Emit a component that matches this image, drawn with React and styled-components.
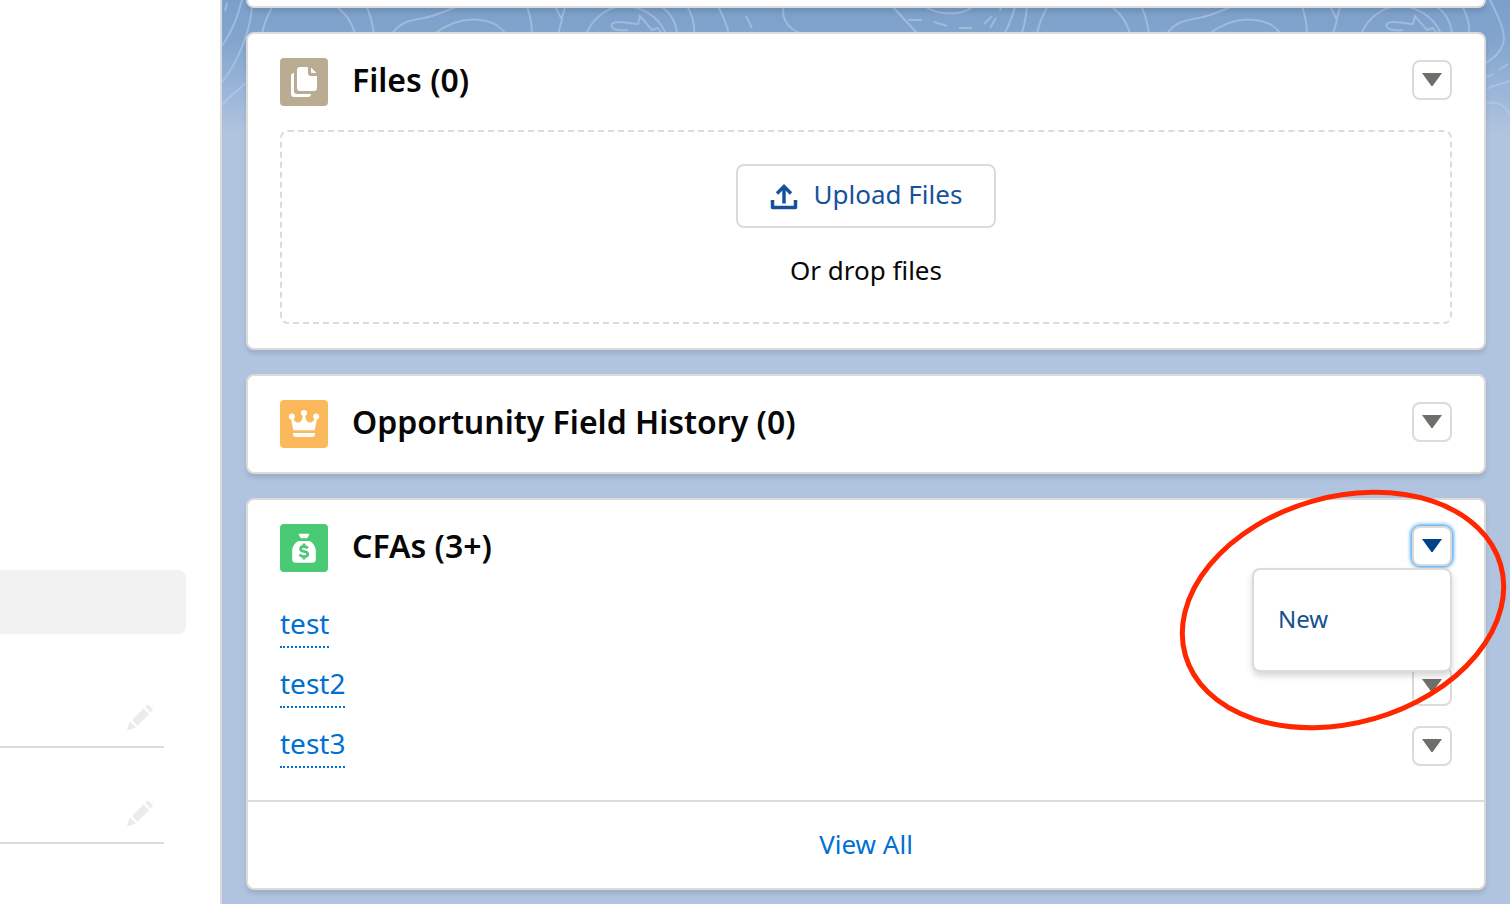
import React, { useState } from "react";
import styled, { createGlobalStyle, css } from "styled-components";

const GlobalStyle = createGlobalStyle`
  * {
    box-sizing: border-box;
  }

  body {
    margin: 0;
    background: #fff;
    color: #080707;
    font-family: "Noto Sans", "Open Sans", sans-serif;
    font-size: 26px;
    line-height: 36px;
  }

  button {
    font: inherit;
    cursor: pointer;
  }

  ul {
    list-style: none;
    margin: 0;
    padding: 0;
  }
`;

const Page = styled.div`
  display: grid;
  grid-template-columns: 220px minmax(0, 1fr);
  height: 100vh;
  overflow: hidden;
`;

const Details = styled.section`
  display: flex;
  flex-direction: column;
  justify-content: flex-end;
  padding: 0 56px 60px 0;
`;

const Highlight = styled.div`
  height: 64px;
  margin: 0 -22px 18px 0;
  border-radius: 0 8px 8px 0;
  background: #f2f2f2;
`;

const Field = styled.div`
  display: flex;
  align-items: flex-end;
  justify-content: flex-end;
  height: 96px;
  padding: 0 10px 15px;
  border-bottom: 2px solid #dddbda;
`;

const EditButton = styled.button`
  display: flex;
  padding: 0;
  border: none;
  background: none;
  color: #ecebea;

  svg {
    width: 28px;
    height: 28px;
  }
`;

const Related = styled.main`
  position: relative;
  display: flex;
  flex-direction: column;
  gap: 24px;
  padding: 0 24px;
  border-left: 2px solid #dddbda;
  background: linear-gradient(#7b9fca 0, #82a5cd 40px, #9ab5d8 90px, #b0c4df 134px) #b0c4df;
`;

const Contours = styled.svg`
  position: absolute;
  top: 0;
  left: 0;
  width: 100%;
  height: 140px;
  fill: none;
  stroke: #b9cdea;
  stroke-opacity: 0.55;
  stroke-width: 2;
`;

const Card = styled.article`
  position: relative;
  border: 2px solid #dddbda;
  border-radius: 8px;
  background: #fff;
  box-shadow: 0 4px 4px rgba(0, 0, 0, 0.1);
`;

const CardStub = styled(Card)`
  height: 8px;
  border-top: none;
  border-radius: 0 0 8px 8px;
`;

const CardHeader = styled.header`
  display: flex;
  gap: 24px;
  padding: 24px 32px;
`;

const EntityIcon = styled.span`
  width: 48px;
  height: 48px;
  border-radius: 4px;
  background: ${({ $color }) => $color};

  svg {
    display: block;
    width: 48px;
    height: 48px;
    fill: #fff;
  }
`;

const Title = styled.h2`
  flex: 1;
  margin: 0;
  font-size: 32px;
  font-weight: 600;
  line-height: 44px;
`;

const MenuAnchor = styled.div`
  position: relative;
  padding-top: 2px;
`;

const ArrowButton = styled.button`
  display: flex;
  align-items: center;
  justify-content: center;
  width: 40px;
  height: 40px;
  padding: 0;
  border: 2px solid #dddbda;
  border-radius: 8px;
  background: #fff;
  color: #706e6b;

  svg {
    width: 20px;
    height: 14px;
    fill: currentColor;
  }

  ${({ $open }) => $open && css`
    color: #004487;
    box-shadow: 0 0 4px 1px #1589ee;
  `}
`;

const Menu = styled.ul`
  position: absolute;
  z-index: 2;
  top: 44px;
  right: 0;
  width: 200px;
  && {
    padding: 24px 0;
  }
  border: 2px solid #dddbda;
  border-radius: 8px;
  background: #fff;
  box-shadow: 0 4px 6px rgba(0, 0, 0, 0.16);
`;

const MenuItem = styled.button`
  display: block;
  width: 100%;
  padding: 6px 24px 8px;
  border: none;
  background: none;
  color: #16528f;
  font-size: 24px;
  line-height: 38px;
  text-align: left;
`;

const DropZone = styled.div`
  display: flex;
  flex-direction: column;
  align-items: center;
  gap: 24px;
  margin: 0 32px 24px;
  padding: 32px 32px 34px;
  border: 2px dashed #dddbda;
  border-radius: 8px;
`;

const UploadButton = styled.button`
  display: flex;
  align-items: center;
  gap: 16px;
  height: 64px;
  padding: 0 32px;
  border: 2px solid #dddbda;
  border-radius: 8px;
  background: #fff;
  color: #16529a;

  svg {
    width: 28px;
    height: 28px;
  }

  span {
    padding-bottom: 4px;
  }
`;

const Records = styled.ul`
  && {
    padding: 0 32px 24px;
  }
`;

const Record = styled.li`
  display: flex;
  align-items: flex-start;
  justify-content: space-between;
  height: 60px;
  padding-top: 10px;

  a {
    padding-bottom: 6px;
    border-bottom: 2px dotted #0070d2;
    color: #0070d2;
    font-size: 28px;
    line-height: 34px;
    text-decoration: none;
  }
`;

const CardFooter = styled.footer`
  padding: 24px 0 26px;
  border-top: 2px solid #dddbda;
  text-align: center;

  a {
    color: #0070d2;
    text-decoration: none;
  }
`;

const Annotation = styled.svg`
  position: absolute;
  z-index: 3;
  top: -12px;
  right: -24px;
  width: 330px;
  height: 248px;
  fill: none;
  stroke: #ff2600;
  stroke-width: 5;
  pointer-events: none;
`;

const FilesIcon = () => (
  <svg viewBox="0 0 48 48" aria-hidden="true">
    <path d="M11 18a3 3 0 0 1 3-3v18a3 3 0 0 0 3 3h14a3 3 0 0 1-3 3H14a3 3 0 0 1-3-3z" />
    <path d="M20 9h8v6a3 3 0 0 0 3 3h6v12a3 3 0 0 1-3 3H20a3 3 0 0 1-3-3V12a3 3 0 0 1 3-3z" />
    <path d="M31 9.5l5.5 5.5H32a1 1 0 0 1-1-1z" />
  </svg>
);

const CrownIcon = () => (
  <svg viewBox="0 0 48 48" aria-hidden="true">
    <circle cx="24" cy="13" r="3" />
    <circle cx="11.8" cy="16.5" r="3" />
    <circle cx="36.2" cy="16.5" r="3" />
    <path d="M11 18l2-1c.5 3.500 2.500 5.500 5 5.500 3 0 4.800-3 4.800-8h2.400c0 5 1.800 8 4.800 8 2.500 0 4.500-2 5-5.500l2 1-2 11.300a1.200 1.200 0 0 1-1.200 1H14.200a1.200 1.200 0 0 1-1.200-1z" />
    <path d="M13 33h22v1a3 3 0 0 1-3 3H16a3 3 0 0 1-3-3z" />
  </svg>
);

const MoneyBagIcon = () => (
  <svg viewBox="0 0 48 48" aria-hidden="true">
    <path d="M19.500 9.800h9c.7 0 1 .5.700 1l-1.700 3c-.2.300-.5.500-.9.500h-5.200c-.4 0-.7-.2-.9-.5l-1.700-3c-.3-.5 0-1 .7-1z" />
    <path d="M18.500 17h11c4 2 6.300 6 6.300 10v8.200a3.500 3.500 0 0 1-3.500 3.500H15.700a3.500 3.500 0 0 1-3.500-3.500V27c0-4 2.300-8 6.300-10z" />
    <path d="M27.500 24.500c-.7-1.400-2-2-3.600-2-2 0-3.400.9-3.400 2.400 0 3.500 7.300 1.500 7.300 5.200 0 1.600-1.600 2.600-3.800 2.600-1.900 0-3.400-.8-4.200-2.300M24 19.500V23M24 32v3.500" fill="none" stroke="#4bca76" strokeWidth="2.800" />
  </svg>
);

const UploadIcon = () => (
  <svg viewBox="0 0 28 28" fill="none" stroke="currentColor" aria-hidden="true">
    <path d="M14 21.500V4" strokeWidth="3.500" />
    <path d="M7 11.500l7-7 7 7" strokeWidth="3.500" />
    <path d="M2.500 18v7.500h23V18" strokeWidth="3.500" strokeLinejoin="round" />
  </svg>
);

const PencilIcon = () => (
  <svg viewBox="0 0 28 28" fill="currentColor" aria-hidden="true">
    <path d="M19 4l1.500-1.500c1-1 2-1 3 0l2.500 2.500c1 1 1 2 0 3l-1.500 1.500zM17.500 5.500l5.500 5.500L11.500 22.500l-5.500-5.500zM4 18.500l6 6-7.500 2.500c-1 .2-1.500-.2-1.200-1.200z" />
  </svg>
);

const ArrowMenuButton = ({ label, open, onClick }) => (
  <ArrowButton type="button" aria-label={label} aria-expanded={open} $open={open} onClick={onClick}>
    <svg viewBox="0 0 20 14" aria-hidden="true"><path d="M0 0h20L10.600 13h-1.200z" /></svg>
  </ArrowButton>
);

const records = ["test", "test2", "test3"];

export default function App() {
  const [isOpen, setIsOpen] = useState(true);

  return (
    <>
      <GlobalStyle />
      <Page>
        <Details>
          <Highlight />
          <Field><EditButton type="button" aria-label="Edit field"><PencilIcon /></EditButton></Field>
          <Field><EditButton type="button" aria-label="Edit field"><PencilIcon /></EditButton></Field>
        </Details>
        <Related>
          <Contours aria-hidden="true">
            <defs>
              <g id="contours">
                <path d="M5 3L3 11M20 0C16 16 10 32 0 46M30 7C28 32 16 62 0 82M24 83C16 90 8 96 0 105M50 8C45 16 42 24 40 34M116 8C124 14 130 22 133 34M140 0C148 10 150 22 152 34M170 34C180 18 198 20 210 16S232 8 240 4M212 34C228 22 244 18 258 20S278 26 284 34M302 0C308 12 310 22 310 34M332 4L340 20L336 34M345 0L340 18M364 34C372 16 388 6 402 6S436 14 444 34" />
                <path d="M406 30C386 32 386 22 396 22S408 24 416 24L418 16L430 30L436 28L440 34M438 6C448 12 454 22 455 34M464 4C470 14 473 24 472 34M524 16L530 28M562 4C558 20 568 30 580 34" />
                <path d="M493 0C500 14 510 33 506 44S496 58 489 63M490 77L496 74M502 70L511 64M490 89C498 84 506 84 513 81M490 103C498 101 508 104 513 115" />
                <path d="M668 4L696 34M686 20H700M712 22L725 26M737 28H750M702 6C718 16 740 16 752 6M762 24L770 16M768 28L774 18" />
              </g>
            </defs>
            <use href="#contours" />
            <use href="#contours" x="775" />
          </Contours>
          <CardStub as="div" />
          <Card>
            <CardHeader>
              <EntityIcon $color="#baac93"><FilesIcon /></EntityIcon>
              <Title>Files (0)</Title>
              <MenuAnchor><ArrowMenuButton label="Files actions" /></MenuAnchor>
            </CardHeader>
            <DropZone>
              <UploadButton type="button"><UploadIcon /><span>Upload Files</span></UploadButton>
              <span>Or drop files</span>
            </DropZone>
          </Card>
          <Card>
            <CardHeader>
              <EntityIcon $color="#fcb95b"><CrownIcon /></EntityIcon>
              <Title>Opportunity Field History (0)</Title>
              <MenuAnchor><ArrowMenuButton label="Field history actions" /></MenuAnchor>
            </CardHeader>
          </Card>
          <Card>
            <CardHeader>
              <EntityIcon $color="#4bca76"><MoneyBagIcon /></EntityIcon>
              <Title>CFAs (3+)</Title>
              <MenuAnchor>
                <ArrowMenuButton label="CFAs actions" open={isOpen} onClick={() => setIsOpen(!isOpen)} />
                {isOpen && (
                  <Menu>
                    <li><MenuItem type="button">New</MenuItem></li>
                  </Menu>
                )}
              </MenuAnchor>
            </CardHeader>
            <Records>
              {records.map((name) => (
                <Record key={name}>
                  <a href="#record">{name}</a>
                  <ArrowMenuButton label={`${name} actions`} />
                </Record>
              ))}
            </Records>
            <CardFooter><a href="#all">View All</a></CardFooter>
            <Annotation viewBox="0 0 330 248" aria-hidden="true">
              <ellipse cx="165" cy="122" rx="164" ry="113" transform="rotate(-16 165 122)" />
            </Annotation>
          </Card>
        </Related>
      </Page>
    </>
  );
}
